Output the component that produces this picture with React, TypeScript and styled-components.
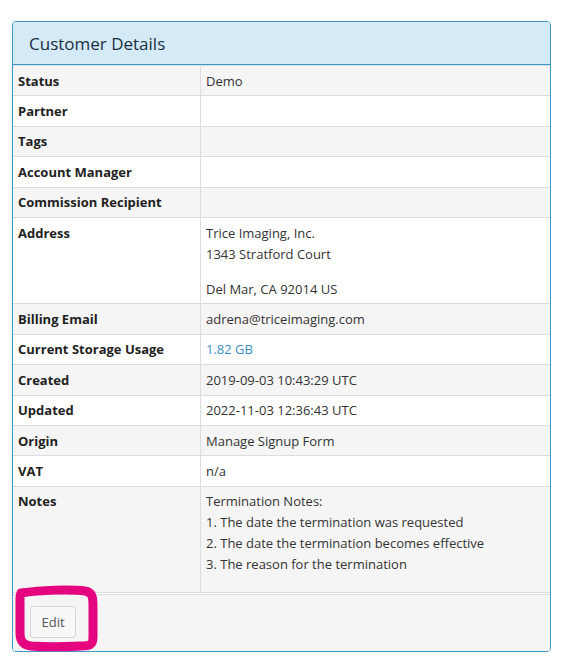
import React from "react";
import styled, { createGlobalStyle } from "styled-components";

const Global = createGlobalStyle`
  html, body { margin: 0; padding: 0; background: #ffffff; }
  body { font-family: "Open Sans", "Noto Sans", "Liberation Sans", sans-serif; color: #333; }
`;

const Page = styled.div`
  padding: 21px 12px 0 12px;
`;

const Panel = styled.section`
  border: 1px solid #3d97cc;
  border-radius: 4px;
  overflow: visible;
  background: #fff;
`;

const Heading = styled.header`
  background: #d4eaf7;
  border-bottom: 1px solid #3d97cc;
  border-radius: 3px 3px 0 0;
  height: 42px;
  display: flex;
  align-items: center;
  padding: 0 16px;
`;

const Title = styled.h3`
  margin: 0;
  font-size: 17px;
  font-weight: 400;
  color: #1a3042;
`;

const Table = styled.table`
  width: 100%;
  border-collapse: collapse;
  font-size: 13px;
  table-layout: fixed;
`;

const Row = styled.tr<{ $striped: boolean }>`
  background: ${(p) => (p.$striped ? "#f5f5f5" : "#ffffff")};
`;

const Label = styled.th`
  width: 177px;
  text-align: left;
  vertical-align: top;
  font-weight: 700;
  color: #222;
  line-height: 21px;
  padding: 4.6px 5px 3.8px 5px;
  border-top: 1px solid #dddddd;
  border-right: 1px solid #dddddd;
  border-bottom: 1px solid #dddddd;
`;

const Value = styled.td<{ $extra?: number }>`
  vertical-align: top;
  line-height: 21px;
  padding: 4.6px 5px ${(p) => 3.8 + (p.$extra || 0)}px 5px;
  border-top: 1px solid #dddddd;
  border-bottom: 1px solid #dddddd;
  color: #333;
  height: 21px;
`;

const Line = styled.div``;

const Gap = styled.div`
  height: 14px;
`;

const Link = styled.a`
  color: #3a8fc6;
  text-decoration: none;
`;

const Footer = styled.footer`
  position: relative;
  background: #f5f5f5;
  border-top: 1px solid #dddddd;
  margin-top: 1px;
  padding: 11px 16px 13px 17px;
  border-radius: 0 0 3px 3px;
`;

const EditButton = styled.button`
  font-family: inherit;
  font-size: 13px;
  color: #555;
  background: #f8f8f8;
  border: 1px solid #d6d6d6;
  border-radius: 3px;
  height: 32px;
  width: 46px;
  padding: 0;
  cursor: pointer;
`;

const Scribble = styled.svg`
  position: absolute;
  left: 0;
  top: -12px;
  width: 92px;
  height: 74px;
  overflow: visible;
  pointer-events: none;
`;

type Item = { label: string; value?: React.ReactNode; extra?: number };

const items: Item[] = [
  { label: "Status", value: "Demo" },
  { label: "Partner" },
  { label: "Tags" },
  { label: "Account Manager" },
  { label: "Commission Recipient" },
  {
    label: "Address",
    value: (
      <>
        <Line>Trice Imaging, Inc.</Line>
        <Line>1343 Stratford Court</Line>
        <Gap />
        <Line>Del Mar, CA 92014 US</Line>
      </>
    ),
  },
  { label: "Billing Email", value: "adrena@triceimaging.com" },
  { label: "Current Storage Usage", value: <Link href="#">1.82 GB</Link> },
  { label: "Created", value: "2019-09-03 10:43:29 UTC" },
  { label: "Updated", value: "2022-11-03 12:36:43 UTC" },
  { label: "Origin", value: "Manage Signup Form" },
  { label: "VAT", value: "n/a" },
  {
    label: "Notes",
    extra: 12.6,
    value: (
      <>
        <Line>Termination Notes:</Line>
        <Line>1. The date the termination was requested</Line>
        <Line>2. The date the termination becomes effective</Line>
        <Line>3. The reason for the termination</Line>
      </>
    ),
  },
];

export default function App() {
  return (
    <>
      <Global />
      <Page>
        <Panel>
          <Heading>
            <Title>Customer Details</Title>
          </Heading>
          <Table>
            <tbody>
              {items.map((it, i) => (
                <Row key={it.label} $striped={i % 2 === 0}>
                  <Label>{it.label}</Label>
                  <Value $extra={it.extra}>{it.value}</Value>
                </Row>
              ))}
            </tbody>
          </Table>
          <Footer>
            <EditButton>Edit</EditButton>
            <Scribble viewBox="0 0 92 74">
              <path
                d="M 8 10 C 28 7 58 6 72 8 C 79 9 80 14 80 22 L 80 54 C 80 62 77 63 68 63 C 50 64 30 64 18 63 C 10 62 7 58 7 50 L 7 14 C 7 11 8 10 10 10"
                fill="none"
                stroke="#e5057f"
                strokeWidth="9"
                strokeLinecap="round"
                strokeLinejoin="round"
              />
            </Scribble>
          </Footer>
        </Panel>
      </Page>
    </>
  );
}
